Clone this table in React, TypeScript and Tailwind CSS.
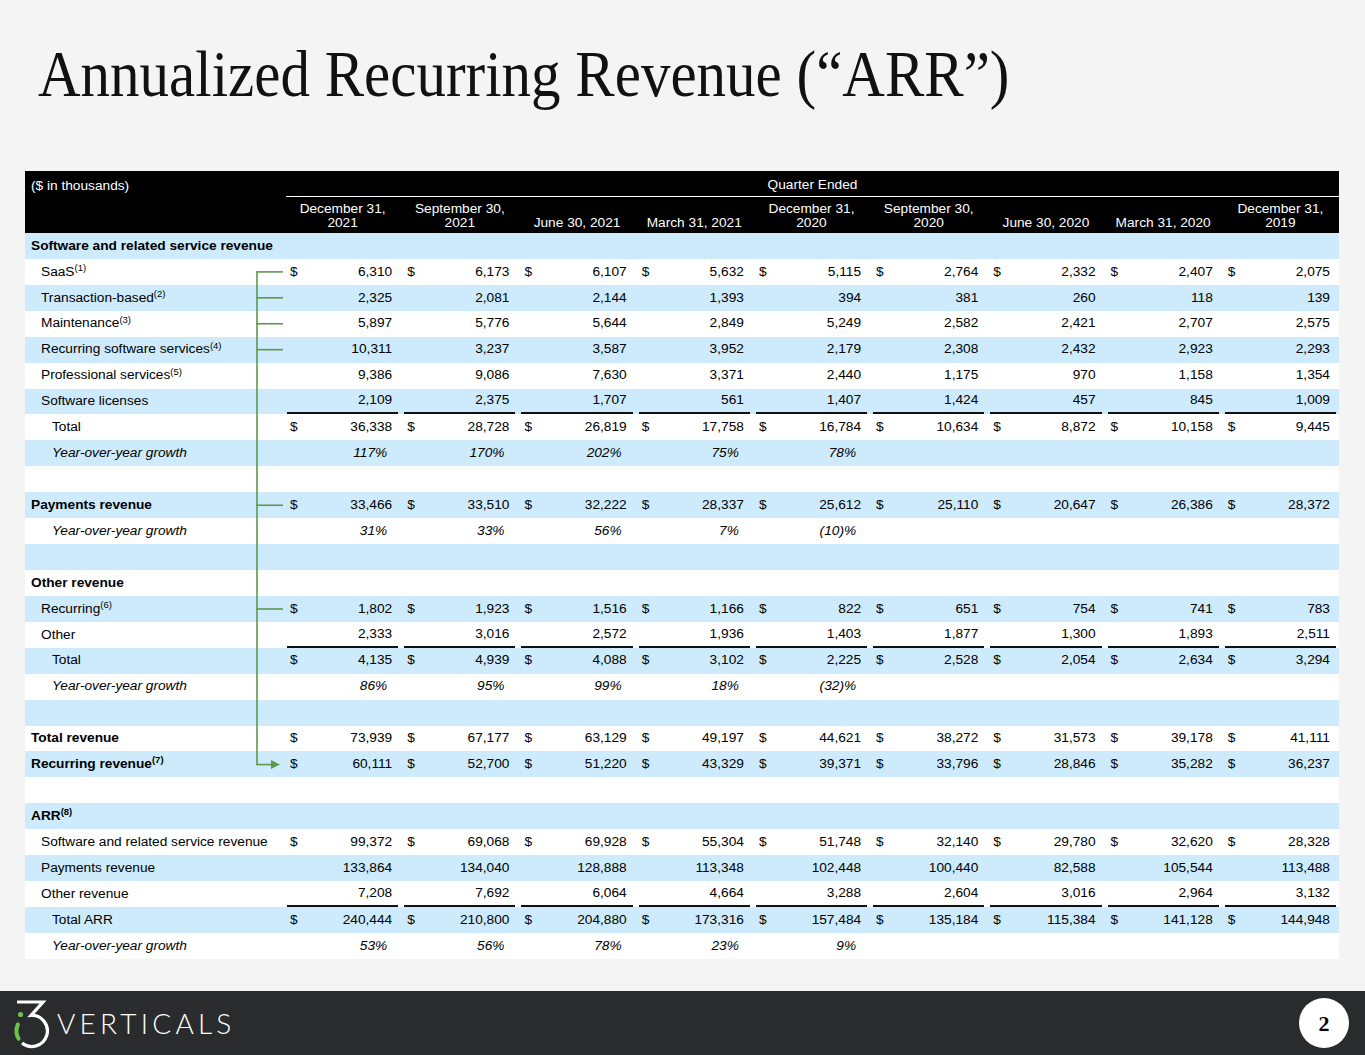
import React from "react";

type Row = {
  label: string;
  sup?: string;
  kind: "section" | "item" | "total" | "growth" | "empty";
  bold?: boolean;
  values?: string[];
  dollar?: boolean;
  underline?: boolean;
};

const columns = [
  "December 31,\n2021",
  "September 30,\n2021",
  "June 30, 2021",
  "March 31, 2021",
  "December 31,\n2020",
  "September 30,\n2020",
  "June 30, 2020",
  "March 31, 2020",
  "December 31,\n2019",
];

const rows: Row[] = [
  { label: "Software and related service revenue", kind: "section" },
  { label: "SaaS", sup: "(1)", kind: "item", dollar: true, values: ["6,310", "6,173", "6,107", "5,632", "5,115", "2,764", "2,332", "2,407", "2,075"] },
  { label: "Transaction-based", sup: "(2)", kind: "item", values: ["2,325", "2,081", "2,144", "1,393", "394", "381", "260", "118", "139"] },
  { label: "Maintenance", sup: "(3)", kind: "item", values: ["5,897", "5,776", "5,644", "2,849", "5,249", "2,582", "2,421", "2,707", "2,575"] },
  { label: "Recurring software services", sup: "(4)", kind: "item", values: ["10,311", "3,237", "3,587", "3,952", "2,179", "2,308", "2,432", "2,923", "2,293"] },
  { label: "Professional services", sup: "(5)", kind: "item", values: ["9,386", "9,086", "7,630", "3,371", "2,440", "1,175", "970", "1,158", "1,354"] },
  { label: "Software licenses", kind: "item", underline: true, values: ["2,109", "2,375", "1,707", "561", "1,407", "1,424", "457", "845", "1,009"] },
  { label: "Total", kind: "total", dollar: true, values: ["36,338", "28,728", "26,819", "17,758", "16,784", "10,634", "8,872", "10,158", "9,445"] },
  { label: "Year-over-year growth", kind: "growth", values: ["117%", "170%", "202%", "75%", "78%"] },
  { label: "", kind: "empty" },
  { label: "Payments revenue", kind: "item", bold: true, dollar: true, values: ["33,466", "33,510", "32,222", "28,337", "25,612", "25,110", "20,647", "26,386", "28,372"] },
  { label: "Year-over-year growth", kind: "growth", values: ["31%", "33%", "56%", "7%", "(10)%"] },
  { label: "", kind: "empty" },
  { label: "Other revenue", kind: "section" },
  { label: "Recurring", sup: "(6)", kind: "item", dollar: true, values: ["1,802", "1,923", "1,516", "1,166", "822", "651", "754", "741", "783"] },
  { label: "Other", kind: "item", underline: true, values: ["2,333", "3,016", "2,572", "1,936", "1,403", "1,877", "1,300", "1,893", "2,511"] },
  { label: "Total", kind: "total", dollar: true, values: ["4,135", "4,939", "4,088", "3,102", "2,225", "2,528", "2,054", "2,634", "3,294"] },
  { label: "Year-over-year growth", kind: "growth", values: ["86%", "95%", "99%", "18%", "(32)%"] },
  { label: "", kind: "empty" },
  { label: "Total revenue", kind: "item", bold: true, dollar: true, values: ["73,939", "67,177", "63,129", "49,197", "44,621", "38,272", "31,573", "39,178", "41,111"] },
  { label: "Recurring revenue", sup: "(7)", kind: "item", bold: true, dollar: true, values: ["60,111", "52,700", "51,220", "43,329", "39,371", "33,796", "28,846", "35,282", "36,237"] },
  { label: "", kind: "empty" },
  { label: "ARR", sup: "(8)", kind: "section" },
  { label: "Software and related service revenue", kind: "item", dollar: true, values: ["99,372", "69,068", "69,928", "55,304", "51,748", "32,140", "29,780", "32,620", "28,328"] },
  { label: "Payments revenue", kind: "item", values: ["133,864", "134,040", "128,888", "113,348", "102,448", "100,440", "82,588", "105,544", "113,488"] },
  { label: "Other revenue", kind: "item", underline: true, values: ["7,208", "7,692", "6,064", "4,664", "3,288", "2,604", "3,016", "2,964", "3,132"] },
  { label: "Total ARR", kind: "total", dollar: true, values: ["240,444", "210,800", "204,880", "173,316", "157,484", "135,184", "115,384", "141,128", "144,948"] },
  { label: "Year-over-year growth", kind: "growth", values: ["53%", "56%", "78%", "23%", "9%"] },
];

const ROW_H = 25.93;
const HEAD_H = 62;
const rowY = (i: number) => HEAD_H + ROW_H * (i + 0.5);

function Label({ row }: { row: Row }) {
  const pad =
    row.kind === "section" || row.bold ? "pl-[6px]" : row.kind === "item" ? "pl-[16px]" : row.kind === "empty" ? "" : "pl-[27px]";
  return (
    <div className={`${pad} whitespace-nowrap ${row.kind === "section" || row.bold ? "font-bold" : ""} ${row.kind === "growth" ? "italic" : ""}`}>
      {row.label}
      {row.sup && <sup className="text-[9.5px]">{row.sup}</sup>}
    </div>
  );
}

function Connector() {
  const branches = [1, 2, 3, 4, 10, 14];
  const green = "#5b9a4a";
  const end = rowY(20);
  return (
    <svg className="absolute left-0 top-0 pointer-events-none" width={1314} height={HEAD_H + ROW_H * 28}>
      <line x1={232} y1={rowY(1)} x2={232} y2={end} stroke={green} strokeWidth={1.6} />
      {branches.map((b) => (
        <line key={b} x1={231.2} y1={rowY(b)} x2={258} y2={rowY(b)} stroke={green} strokeWidth={1.6} />
      ))}
      <line x1={231.2} y1={end} x2={248} y2={end} stroke={green} strokeWidth={1.6} />
      <polygon points={`246,${end - 4.5} 255,${end} 246,${end + 4.5}`} fill={green} />
    </svg>
  );
}

function Logo() {
  return (
    <svg width={46} height={56} viewBox="0 0 46 56" className="mt-[4px] ml-[8px] shrink-0">
      <path d="M9 7 H35 L23 20.5 A15.5 15.5 0 1 1 14 47.9" fill="none" stroke="#ffffff" strokeWidth={3.2} strokeLinejoin="miter" />
      <path d="M9.95 29.45 A15.5 15.5 0 0 0 10.6 43.75" fill="none" stroke="#6cc24a" strokeWidth={4} strokeLinecap="round" />
      <circle cx={12.5} cy={19.5} r={2.6} fill="#6cc24a" />
    </svg>
  );
}

export default function App() {
  return (
    <div className="w-[1365px] h-[1055px] bg-[#f4f4f4] flex flex-col font-['Liberation_Sans',Arial,sans-serif] text-[13.7px] text-black">
      <div className="h-[171px] pl-[38px] pt-[48px] shrink-0">
        <h1 className="inline-block origin-bottom scale-y-[1.12] font-['Liberation_Serif','Times_New_Roman',serif] text-[59px] leading-none text-[#111]">
          Annualized Recurring Revenue (“ARR”)
        </h1>
      </div>

      <div className="relative ml-[25px] w-[1314px]">
        {/* header */}
        <div className="bg-black text-white">
          <div className="grid grid-cols-[259px_1fr] h-[26px]">
            <div className="pl-[6px] pt-[4px] flex items-center">($ in thousands)</div>
            <div className="ml-[2px] pt-[4px] border-b-[1.5px] border-white flex items-center justify-center">Quarter Ended</div>
          </div>
          <div className="grid grid-cols-[259px_repeat(9,1fr)] h-[36px]">
            <div />
            {columns.map((c) => (
              <div key={c} className="flex items-end justify-center pb-[3px] text-center whitespace-pre-line leading-[14px]">
                {c}
              </div>
            ))}
          </div>
        </div>

        {/* body */}
        {rows.map((row, i) => (
          <div
            key={i}
            className={`grid grid-cols-[259px_repeat(9,1fr)] h-[25.93px] items-center ${i % 2 === 0 ? "bg-[#cdebfc]" : "bg-white"}`}
          >
            <Label row={row} />
            {row.kind !== "empty" &&
              row.kind !== "section" &&
              columns.map((_, ci) => {
                const v = row.values?.[ci] ?? "";
                if (row.kind === "growth") {
                  return (
                    <div key={ci} className="pr-[14px] text-right italic">
                      {v}
                    </div>
                  );
                }
                return (
                  <div
                    key={ci}
                    className={`mx-[3px] h-full flex items-center justify-between pl-[3px] pr-[6px] ${row.underline ? "border-b-2 border-[#111]" : ""}`}
                  >
                    <span>{row.dollar ? "$" : ""}</span>
                    <span>{v}</span>
                  </div>
                );
              })}
          </div>
        ))}
        <Connector />
      </div>

      <div className="mt-auto h-[64px] bg-[#2a2b2d] flex items-start shrink-0">
        <Logo />
        <div className="self-center ml-[3px] font-['Lato',sans-serif] font-light text-[28px] leading-none tracking-[4.2px] text-white">
          VERTICALS
        </div>
        <div className="self-center ml-auto mr-[16px] w-[50px] h-[50px] rounded-full bg-white flex items-center justify-center font-['Liberation_Serif',serif] font-bold text-[22px] text-black">
          2
        </div>
      </div>
    </div>
  );
}
